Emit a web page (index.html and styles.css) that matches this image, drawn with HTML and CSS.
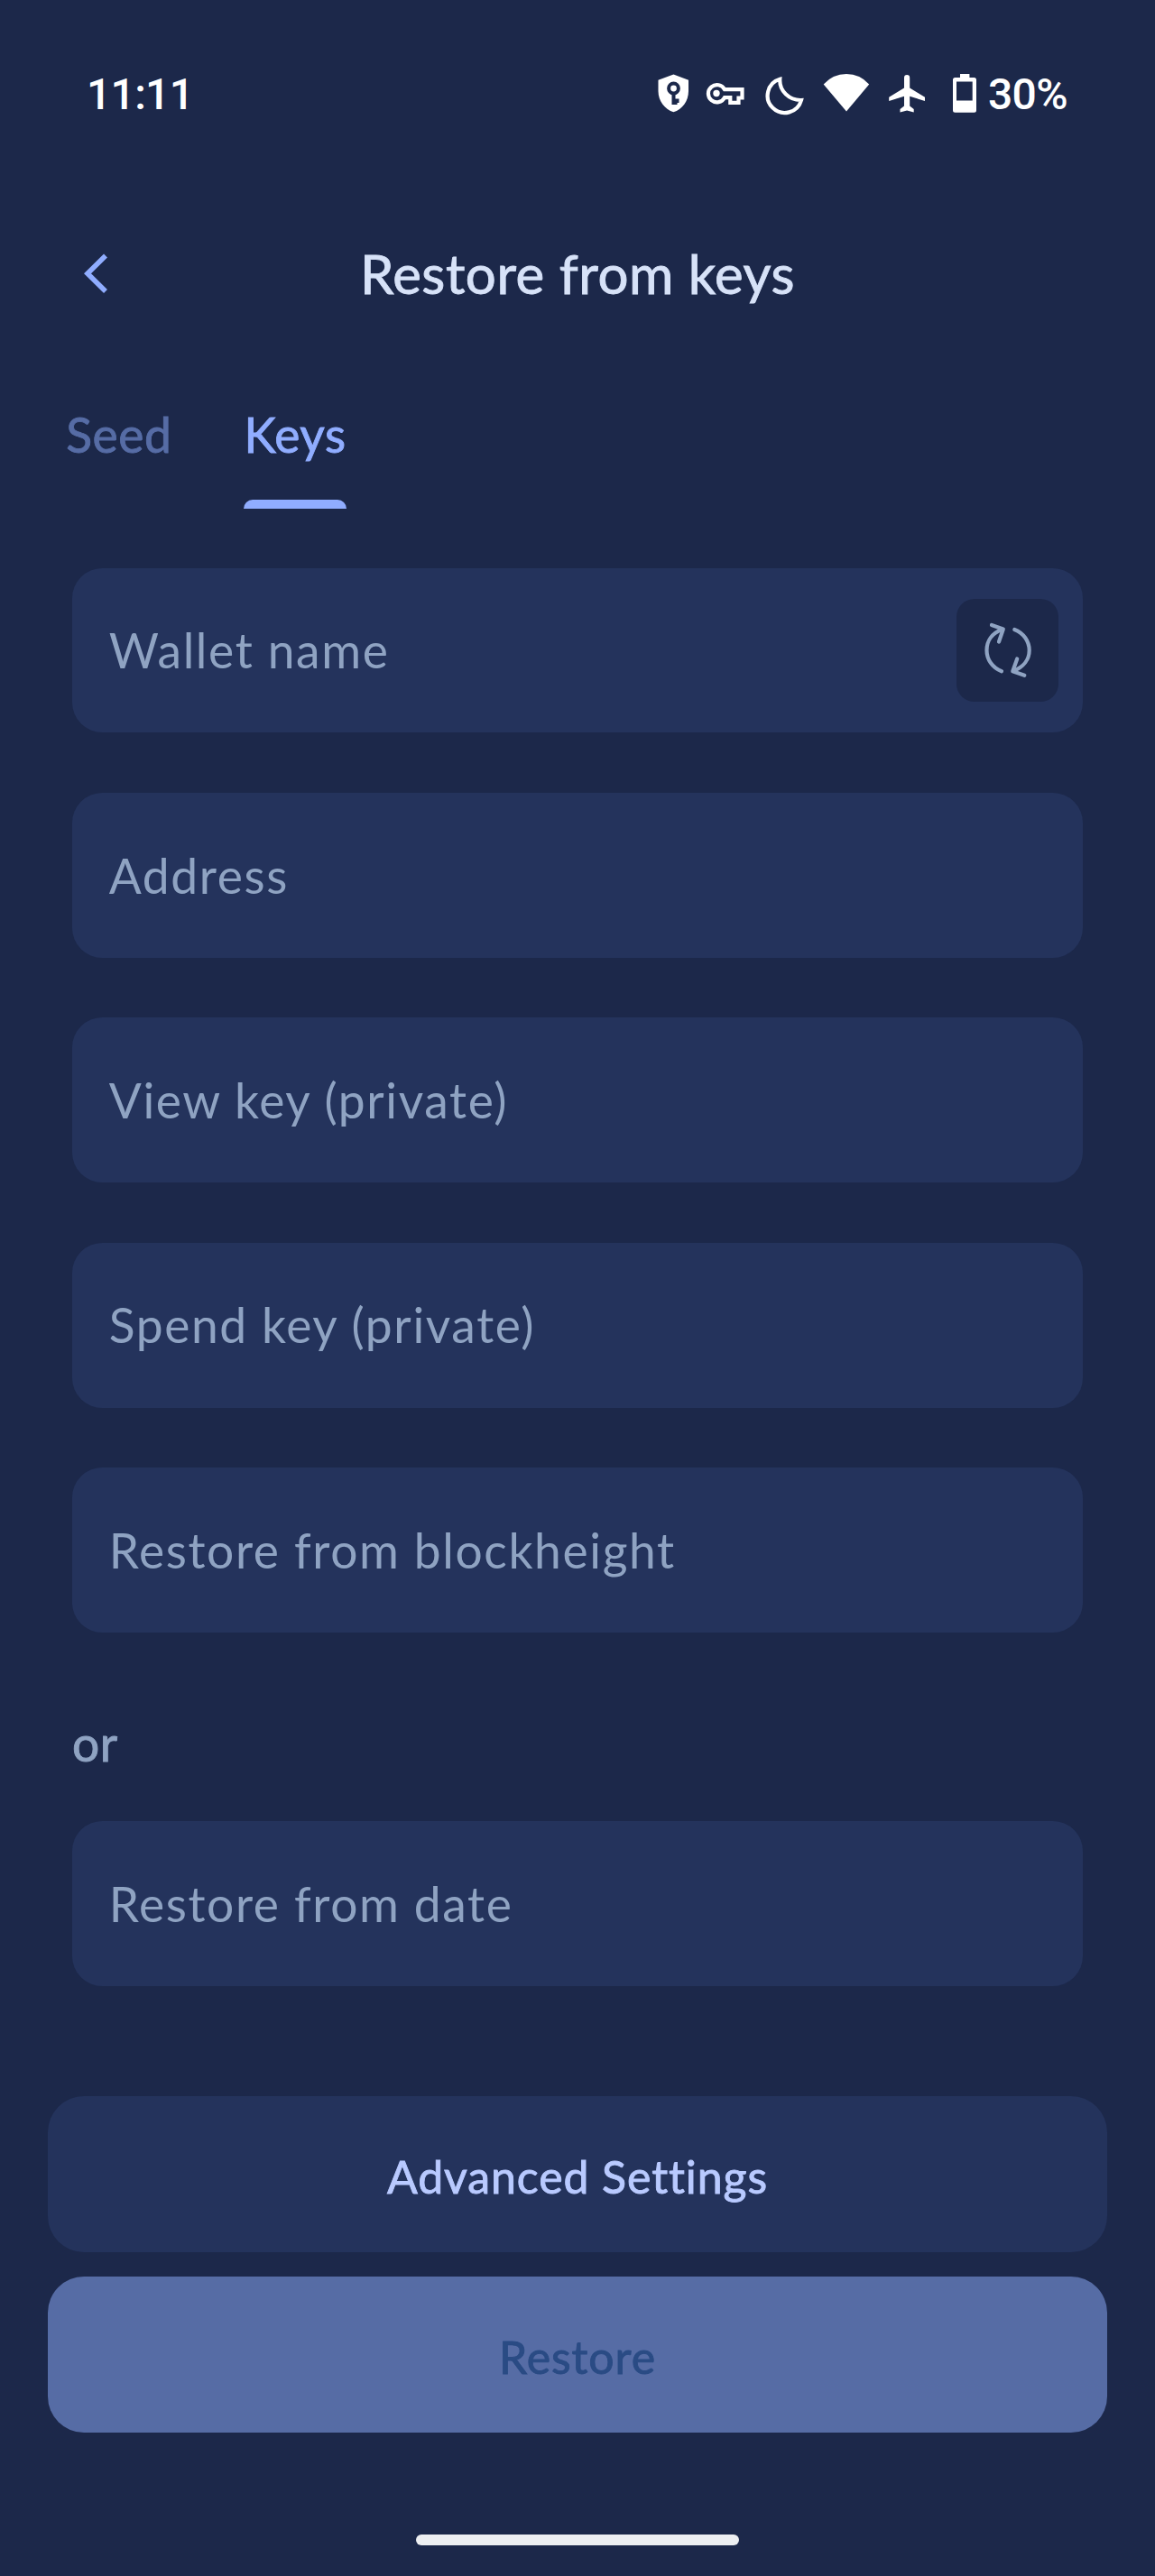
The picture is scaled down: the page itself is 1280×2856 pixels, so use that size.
FILE: index.html
```html
<!DOCTYPE html>
<html lang="en">
<head>
<meta charset="utf-8">
<title>Restore from keys</title>
<link rel="stylesheet" href="styles.css">
</head>
<body>
<div class="screen">
  <header class="status">
    <span class="clock">11:11</span>
    <div class="status-icons">
      <svg class="ic-shield" width="36" height="50" viewBox="728 80 36 50"><path fill="#fff" d="M746.4 82.5 763 88.7V101C763 112 756 121.5 746.4 124.3 737 121.5 729.5 112 729.5 101V88.7Z"/><circle cx="746.5" cy="98" r="5.4" fill="none" stroke="#1c284a" stroke-width="4"/><path fill="#1c284a" d="M744.5 103h4v6.500h4v4.500h-2v2h-6z"/></svg>
      <svg class="ic-key" width="46" height="50" viewBox="781 80 46 50"><path fill="none" stroke="#fff" stroke-width="4.200" d="M803 99.200H822.500V108.500H818.500V113.900H809.300V108.200H803A9.600 9.600 0 1 1 803 99.200Z"/><circle cx="794" cy="103.500" r="3.700" fill="#fff"/></svg>
      <svg class="ic-moon" width="46" height="50" viewBox="848 80 46 50"><path fill="none" stroke="#fff" stroke-width="4.200" stroke-linejoin="miter" d="M864.300 87.800A19 19 0 1 0 888 111C875 111.500 863.500 101 864.300 87.800Z"/></svg>
      <svg class="ic-wifi" width="53" height="50" viewBox="911 80 53 50"><path fill="#fff" d="M912.700 93.500Q923 82 938 82T963.200 93.500L938 123.600Z"/></svg>
      <svg class="ic-plane" width="42" height="50" viewBox="984 80 42 50"><path fill="#fff" d="M1025 111.900V107.800L1008.200 97.500V86.200A3.100 3.100 0 0 0 1002 86.200V97.500L985.200 107.800V111.900L1002 106.800V117.500L997.500 120.900V124.500L1005.100 122.500 1012.700 124.500V120.900L1008.200 117.500V106.800Z"/></svg>
      <svg class="ic-battery" width="28" height="50" viewBox="1055 80 28 50"><path fill="#fff" fill-rule="evenodd" d="M1064 82H1074.400V86H1079.500Q1082 86 1082 88.500V122.300Q1082 124.800 1079.500 124.800H1058.500Q1056 124.800 1056 122.300V88.500Q1056 86 1058.500 86H1064ZM1060 90.500V111.500H1077.700V90.500Z"/></svg>
      <span class="charge">30%</span>
    </div>
  </header>

  <nav class="topbar">
    <svg class="back" width="30" height="46" viewBox="92 280 30 46"><path fill="none" stroke="#90adff" stroke-width="5.600" d="M117 283.600 97 303.300 117 323"/></svg>
    <h1 class="title">Restore from keys</h1>
    <span class="topbar-end"></span>
  </nav>

  <div class="tabs">
    <div class="tab">Seed</div>
    <div class="tab active">Keys</div>
  </div>

  <main class="form">
    <div class="field"><span>Wallet name</span>
      <div class="refresh">
        <svg width="54" height="64" viewBox="1090 689 54 64" fill="none" stroke="#8fa3c2" stroke-width="4.200" stroke-linecap="round" stroke-linejoin="round"><path d="M1099 693 1111.800 697.500 1107 711.500M1111 697.800C1099 702 1093.500 711 1093.500 721S1099.500 740 1110 744.300"/><path d="M1135.300 748.800 1122.300 744.300 1127.200 730.500M1123 744C1134.500 739.500 1140.700 731 1140.700 721S1134.500 702 1124.300 698"/></svg>
      </div>
    </div>
    <div class="field"><span>Address</span></div>
    <div class="field"><span>View key (private)</span></div>
    <div class="field"><span>Spend key (private)</span></div>
    <div class="field"><span>Restore from blockheight</span></div>
    <div class="or">or</div>
    <div class="field"><span>Restore from date</span></div>
  </main>

  <footer class="actions">
    <div class="btn secondary">Advanced Settings</div>
    <div class="btn primary">Restore</div>
  </footer>
  <div class="home-bar"></div>
</div>
</body>
</html>
```
FILE: styles.css
```css
* { box-sizing: border-box; }
body { margin: 0; background: #1c284a; }
.screen {
  width: 1280px;
  height: 2856px;
  display: flex;
  flex-direction: column;
  font-family: Lato, sans-serif;
  background: #1c284a;
  overflow: hidden;
}
svg { display: block; flex: none; }
.status {
  height: 130px;
  flex: none;
  padding: 80px 96px 0 96px;
  display: flex;
  justify-content: space-between;
  color: #fff;
  font: 500 48px/49px Roboto, sans-serif;
}
.clock { letter-spacing: -.7px; }
.status-icons { display: flex; width: 456px; }
.ic-key { margin-left: 17px; }
.ic-moon { margin-left: 21px; }
.ic-wifi { margin-left: 17px; }
.ic-plane { margin-left: 20px; }
.ic-battery { margin-left: 29px; }
.charge { margin-left: 12px; letter-spacing: -.7px; }

/* Medium weight: the regular face thickened by a fine outline */
.title, .tabs, .or, .btn { -webkit-text-stroke: .9px currentColor; }

.topbar {
  height: 106px;
  margin-top: 120px;
  flex: none;
  padding: 0 92px;
  display: flex;
  justify-content: space-between;
}
.back { margin-top: 30px; }
.topbar-end { width: 30px; }
.title {
  margin: 0;
  font-size: 60px;
  line-height: 106px;
  font-weight: 400;
  letter-spacing: .550px;
  color: #d7e2f8;
  white-space: nowrap;
}

.tabs {
  height: 134px;
  margin-top: 74px;
  flex: none;
  padding-left: 73.300px;
  display: flex;
  gap: 80px;
  font-size: 53.33px;
  line-height: 103px;
  letter-spacing: .550px;
  color: #566ca5;
}
.tab { display: flex; flex-direction: column; justify-content: space-between; }
.tab.active { color: #90adff; }
.tab.active::after {
  content: "";
  height: 10.4px;
  border-radius: 10px 10px 0 0;
  background: #90adff;
}

.form { flex: none; padding: 65.700px 80px 0; }
.field {
  height: 182.700px;
  margin-bottom: 66.700px;
  border-radius: 33.300px;
  background: #24335c;
  padding: 0 26.700px 0 40.700px;
  display: flex;
  align-items: center;
  justify-content: space-between;
  color: #8fa3c2;
  font-size: 53.330px;
  line-height: 64px;
  letter-spacing: 1.620px;
}
.field span { padding-bottom: 1.600px; }
.refresh {
  width: 113.300px;
  height: 113.300px;
  border-radius: 20px;
  background: #1c284a;
  display: flex;
  align-items: center;
  justify-content: center;
}
.or {
  height: 76px;
  margin: 84px 0 49.300px;
  font-size: 53.330px;
  line-height: 76px;
  letter-spacing: .550px;
  color: #8fa3c2;
}

.actions {
  flex: none;
  padding: 55.300px 53.300px 0;
  display: flex;
  flex-direction: column;
  gap: 26.700px;
}
.btn {
  height: 173px;
  border-radius: 40px;
  display: flex;
  align-items: center;
  justify-content: center;
  padding-top: 5px;
  font-size: 50px;
  letter-spacing: .920px;
}
.secondary { background: #24335c; color: #b9caff; }
.primary { background: #566ca5; color: #2a4b84; }
.home-bar {
  width: 358px;
  height: 12px;
  border-radius: 6px;
  background: #edeff2;
  margin: auto auto 34px;
  flex: none;
}
```
